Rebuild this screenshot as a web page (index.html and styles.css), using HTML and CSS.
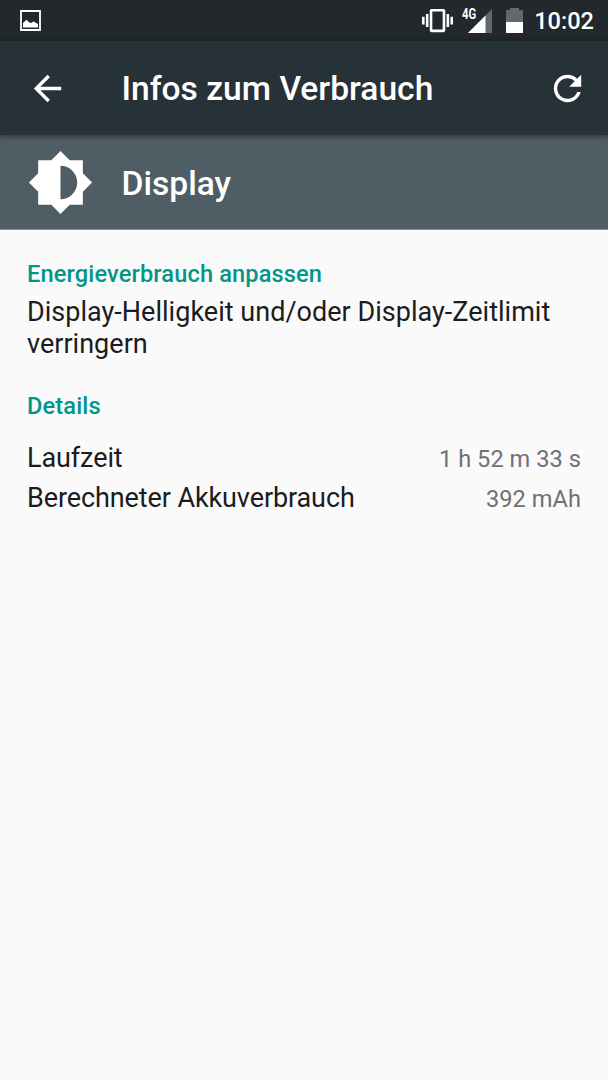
FILE: index.html
```html
<!DOCTYPE html>
<html lang="de">
<head>
    <meta charset="UTF-8">
    <meta name="viewport" content="width=device-width, initial-scale=1.0">
    <title>Infos zum Verbrauch</title>
    <link rel="stylesheet" href="styles.css">
</head>
<body>
    <div class="status-bar">
        <svg class="icon-image" viewBox="0 0 21 21">
            <path d="M1 1h19v19H1z" fill="none" stroke="#fff" stroke-width="1.800"/>
            <path d="M3 17.500v-4.500l3.500-3.200 2.500 2.400 2 .8 2.500-1.500 2 1 2.500 1.500v3.500z" fill="#fff"/>
        </svg>
        <div class="status-icons">
            <svg class="icon-vibrate" viewBox="0 0 24 24">
                <path fill="#fff" d="M0 15h2V9H0v6zm3 2h2V7H3v10zm19-8v6h2V9h-2zm-3 8h2V7h-2v10zM16.500 3h-9C6.670 3 6 3.670 6 4.500v15c0 .83.67 1.500 1.500 1.500h9c.83 0 1.500-.67 1.500-1.500v-15c0-.83-.67-1.500-1.500-1.500zM16 19H8V5h8v14z"/>
            </svg>
            <div class="signal">
                <span class="network">4G</span>
                <svg class="icon-signal" viewBox="0 0 24 24">
                    <path d="M0 24L24 0v24z" fill="#64686a"/>
                    <path d="M0 24L17.500 6.500V24z" fill="#fff"/>
                </svg>
            </div>
            <svg class="icon-battery" viewBox="0 0 17 25">
                <path d="M0 2h4V0h9v2h4v13H0z" fill="#64686a"/>
                <path d="M0 14h17v11H0z" fill="#fff"/>
            </svg>
            <span class="clock">10:02</span>
        </div>
    </div>

    <header class="app-bar">
        <svg class="icon-back" viewBox="0 0 24 24">
            <path fill="#fff" d="M20 11H7.830l5.590-5.590L12 4l-8 8 8 8 1.410-1.410L7.830 13H20v-2z"/>
        </svg>
        <h1>Infos zum Verbrauch</h1>
        <svg class="icon-refresh" viewBox="0 0 24 24">
            <path fill="#fff" d="M17.650 6.350C16.200 4.900 14.210 4 12 4c-4.420 0-7.990 3.580-7.990 8s3.570 8 7.990 8c3.730 0 6.840-2.550 7.730-6h-2.080c-.82 2.330-3.040 4-5.650 4-3.310 0-6-2.690-6-6s2.690-6 6-6c1.660 0 3.140.69 4.220 1.780L13 11h7V4l-2.350 2.350z"/>
        </svg>
    </header>

    <div class="entry-header">
        <svg class="icon-brightness" viewBox="0 0 24 24">
            <path fill="#fff" d="M20 15.310L23.310 12 20 8.690V4h-4.690L12 .69 8.690 4H4v4.690L.69 12 4 15.310V20h4.690L12 23.310 15.310 20H20v-4.690zM12 18V6c3.310 0 6 2.690 6 6s-2.690 6-6 6z"/>
        </svg>
        <h2>Display</h2>
    </div>

    <main>
        <h3>Energieverbrauch anpassen</h3>
        <p class="hint">Display-Helligkeit und/oder Display-Zeitlimit verringern</p>

        <h3>Details</h3>
        <div class="details">
            <div class="row">
                <span>Laufzeit</span>
                <span class="value">1 h 52 m 33 s</span>
            </div>
            <div class="row">
                <span>Berechneter Akkuverbrauch</span>
                <span class="value">392 mAh</span>
            </div>
        </div>
    </main>
</body>
</html>
```
FILE: styles.css
```css
* {
    box-sizing: border-box;
}

body {
    margin: 0;
    min-height: 100vh;
    background-color: #fafafa;
    color: #1a1c1d;
    font-family: Roboto, sans-serif;
}

h1, h2, h3, p {
    margin: 0;
}

h1, h2, h3 {
    font-weight: 500;
}

svg {
    display: block;
    flex: none;
}

/* Status bar */
.status-bar {
    display: flex;
    align-items: center;
    justify-content: space-between;
    height: 41px;
    padding: 0 14px 0 20px;
    background-color: #22282b;
    color: white;
}

.status-icons {
    display: flex;
    align-items: center;
}

.icon-image {
    width: 21px;
    height: 21px;
}

.icon-vibrate {
    width: 31px;
    height: 31px;
}

.signal {
    position: relative;
    margin: 0 14px 0 15px;
}

.network {
    position: absolute;
    left: -6px;
    top: -1px;
    font-size: 14.5px;
    font-weight: 700;
    line-height: 14px;
    transform: scaleX(0.78);
    transform-origin: left;
}

.icon-signal {
    width: 24px;
    height: 24px;
}

.icon-battery {
    width: 17px;
    height: 25px;
}

.clock {
    margin-left: 11px;
    font-size: 23.6px;
    font-weight: 500;
    line-height: 40px;
}

/* Title bar */
.app-bar {
    position: relative;
    display: flex;
    align-items: center;
    height: 94px;
    padding: 0 20px 0 27px;
    background-color: #273238;
    color: white;
    box-shadow: 0 1px 5px 1px rgba(0, 0, 0, 0.4);
}

.icon-back,
.icon-refresh {
    width: 41px;
    height: 41px;
}

h1,
h2 {
    padding-top: 2px;
    font-size: 33.6px;
    line-height: 40px;
}

h1 {
    flex: 1;
    margin-left: 53.5px;
}

.entry-header {
    display: flex;
    align-items: center;
    height: 95px;
    padding-left: 27px;
    background-color: #4f5d64;
    border-bottom: 1px solid #84909a;
    color: white;
}

.icon-brightness {
    width: 67px;
    height: 67px;
}

h2 {
    margin-left: 27.5px;
    padding-top: 4px;
}

/* Content */
main {
    padding: 30px 27px 0;
}

h3 {
    color: #009688;
    font-size: 23.6px;
    line-height: 28px;
    letter-spacing: 0.13px;
}

.hint {
    margin: 8px 0 32px;
    font-size: 27px;
    line-height: 32px;
    letter-spacing: 0.02px;
}

.details {
    margin-top: 18px;
}

.row {
    display: flex;
    align-items: baseline;
    justify-content: space-between;
    font-size: 27px;
    line-height: 40px;
    letter-spacing: -0.1px;
}

.value {
    color: #6f7173;
    font-size: 23.6px;
    line-height: 36px;
    letter-spacing: 0.05px;
}
```
